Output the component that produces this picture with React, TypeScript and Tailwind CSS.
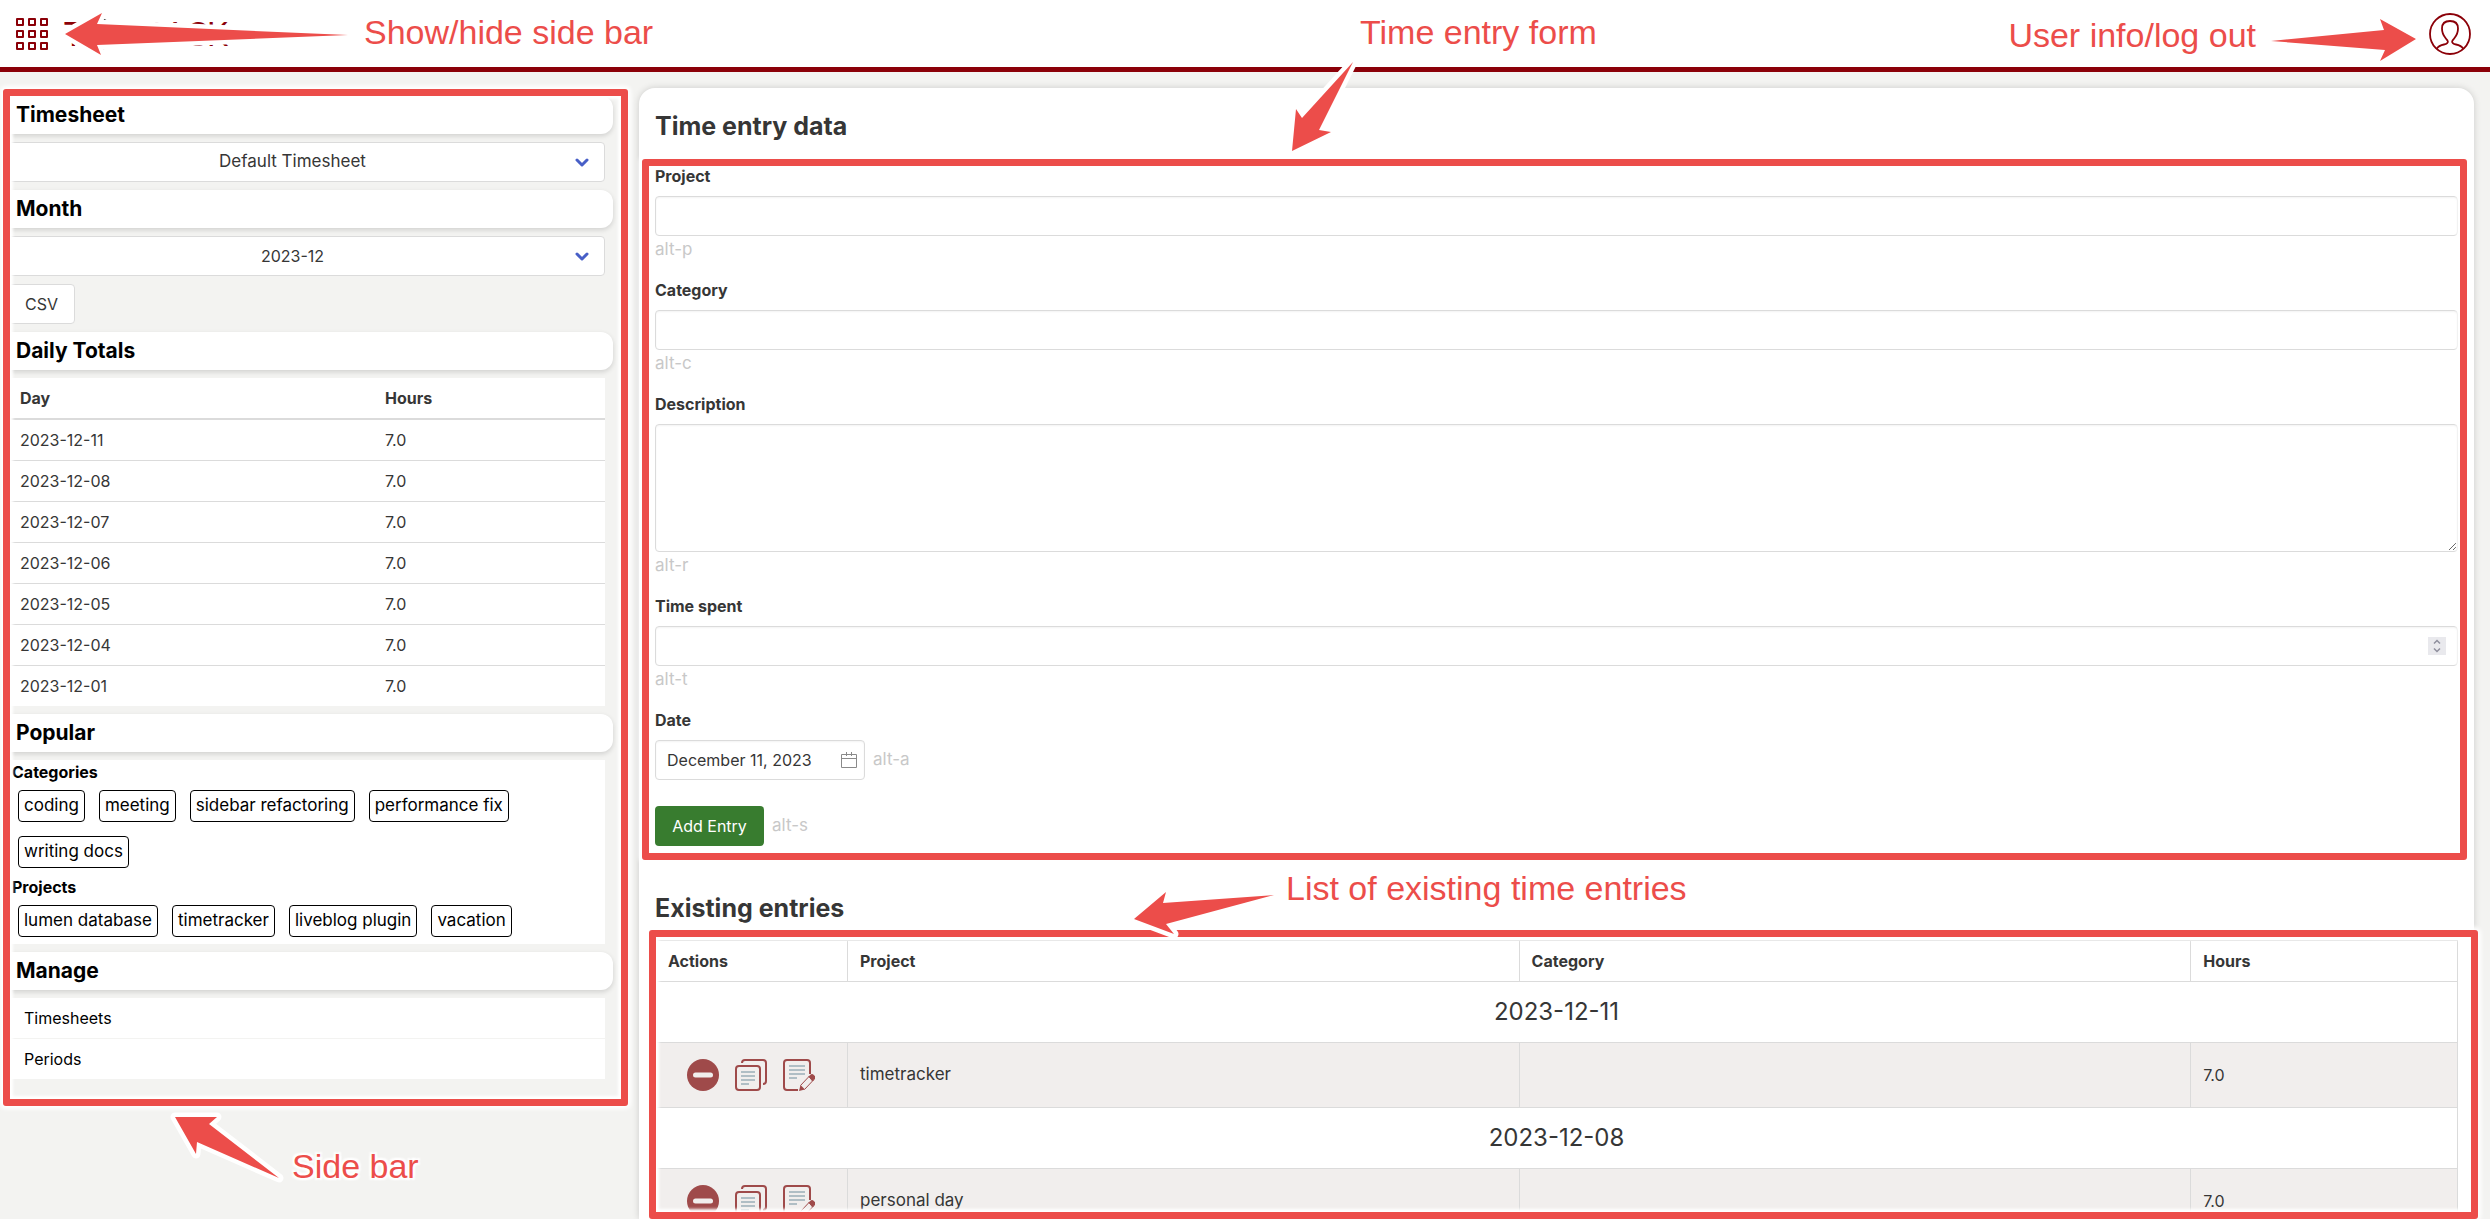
import type { ReactNode } from "react";

const days = ["2023-12-11", "2023-12-08", "2023-12-07", "2023-12-06", "2023-12-05", "2023-12-04", "2023-12-01"];
const categories = ["coding", "meeting", "sidebar refactoring", "performance fix", "writing docs"];
const projects = ["lumen database", "timetracker", "liveblog plugin", "vacation"];
const entries = [
  { date: "2023-12-11", project: "timetracker", category: "", hours: "7.0" },
  { date: "2023-12-08", project: "personal day", category: "", hours: "7.0" },
];

function Frame({ className }: { className: string }) {
  return (
    <div
      className={`pointer-events-none absolute z-10 rounded-[3px] border-[7px] border-[#ec4d4a] shadow-[0_0_4px_3px_#fff,inset_0_0_3px_3px_#fff] ${className}`}
    />
  );
}

function Arrow({ className, width, height, points }: { className: string; width: number; height: number; points: string }) {
  return (
    <svg
      aria-hidden="true"
      width={width}
      height={height}
      viewBox={`0 0 ${width} ${height}`}
      className={`pointer-events-none absolute z-20 overflow-visible ${className}`}
    >
      <polygon points={points} fill="#fff" stroke="#fff" strokeWidth="9" strokeLinejoin="round" />
      <polygon points={points} fill="#ec4d4a" />
    </svg>
  );
}

function Note({ className, children }: { className: string; children: ReactNode }) {
  return (
    <div
      className={`pointer-events-none absolute z-20 font-['Liberation_Sans',sans-serif] text-[34px] leading-[34px] whitespace-nowrap text-[#ec4d4a] [text-shadow:0_0_3px_#fff,0_0_3px_#fff,2px_2px_2px_#fff,-2px_-2px_2px_#fff,2px_-2px_2px_#fff,-2px_2px_2px_#fff] ${className}`}
    >
      {children}
    </div>
  );
}

function SideHeading({ children }: { children: ReactNode }) {
  return (
    <h2 className="flex h-[38px] items-center rounded-r-xl bg-white pl-2 text-[21px] font-bold text-black shadow-[0_2px_5px_rgba(0,0,0,0.14)]">
      {children}
    </h2>
  );
}

function SideSelect({ label, value, small }: { label: string; value: string; small?: boolean }) {
  return (
    <div className="relative mr-2">
      <select
        aria-label={label}
        defaultValue={value}
        className={`h-10 w-full appearance-none rounded border border-[#dbdbdb] bg-white pr-10 pl-3 [text-align-last:center] ${small ? "text-base" : "text-[17px]"}`}
      >
        <option>{value}</option>
      </select>
      <svg aria-hidden="true" viewBox="0 0 14 10" className="pointer-events-none absolute top-4 right-4 h-[10px] w-[14px]">
        <path d="M2 2l5 5 5-5" fill="none" stroke="#485fc7" strokeWidth="3" strokeLinecap="round" strokeLinejoin="round" />
      </svg>
    </div>
  );
}

function Chips({ items }: { items: string[] }) {
  return (
    <div className="flex flex-wrap gap-x-3.5 gap-y-3.5 pt-1.5 pr-16 pb-[7px] pl-2.5">
      {items.map((item) => (
        <a key={item} href="#" className="flex h-8 items-center rounded border border-black px-[5px] text-[17px] text-black">
          {item}
        </a>
      ))}
    </div>
  );
}

const inputClass =
  "block h-10 w-full rounded border border-[#dbdbdb] bg-white px-[11px] text-base text-[#363636] shadow-[inset_0_1px_2px_rgba(10,10,10,0.05)] outline-none";

function Field({ id, label, hint, children }: { id: string; label: string; hint: string; children: ReactNode }) {
  return (
    <div className="mb-4">
      <label htmlFor={id} className="mb-2 block text-base leading-6 font-bold">
        {label}
      </label>
      {children}
      <p className="text-[17px] leading-[26px] text-[#c8c8c8]">{hint}</p>
    </div>
  );
}

function RemoveIcon() {
  return (
    <svg viewBox="0 0 32 32" className="size-8">
      <circle cx="16" cy="16" r="16" fill="#9f4a4a" />
      <rect x="6" y="13.5" width="20" height="5" rx="2.5" fill="#f1eeed" />
    </svg>
  );
}

function CopyIcon() {
  return (
    <svg viewBox="0 0 32 32" className="size-8" fill="none" stroke="#9f4a4a" strokeWidth="2">
      <path d="M7 4C7 2 8 1 10 1H28a3 3 0 0 1 3 3V22c0 2-1 3-3 3" />
      <rect x="1" y="7" width="24" height="24" rx="3" />
      <path d="M6 13H20M6 17H20M6 21H20M6 25H14" stroke="#b0bec5" />
    </svg>
  );
}

function EditIcon() {
  return (
    <svg viewBox="0 0 32 32" className="size-8" fill="none" stroke="#9f4a4a" strokeWidth="2">
      <path d="M27 15V4a3 3 0 0 0-3-3H4a3 3 0 0 0-3 3V28a3 3 0 0 0 3 3H15" />
      <path d="M6 7H22M6 11H22M6 15H22M6 19H14" stroke="#b0bec5" />
      <path d="M16 32l1.500-6 4.500 4.500z" fill="#9f4a4a" stroke="none" />
      <path d="M17.500 26.500L26 17.500l4 4-8.500 9" strokeWidth="1" />
      <path d="M26 17.500l1-1a2.800 2.800 0 0 1 4 0 2.800 2.800 0 0 1 0 4l-1.500 1.500z" fill="#9f4a4a" strokeWidth="1" />
    </svg>
  );
}

export default function App() {
  return (
    <div className="relative flex h-screen flex-col overflow-hidden bg-[#f3f3f1] font-[Inter,'Noto_Sans',sans-serif] text-base text-[#363636]">
      <header className="flex h-[72px] shrink-0 items-center border-b-[5px] border-[#8b0008] bg-white pr-[19px] pl-4">
        <button aria-label="Toggle side bar" className="grid grid-cols-3 gap-1">
          {Array.from({ length: 9 }, (_, i) => (
            <span key={i} className="size-2 rounded-[1px] border-2 border-[#8b0008]" />
          ))}
        </button>
        <a
          href="#"
          className="ml-4 flex w-[164px] items-center font-[Lato,sans-serif] text-[32px] leading-none text-[#8b0008]"
        >
          <span>T</span>
          <svg aria-hidden="true" viewBox="0 0 32 32" className="size-8" fill="none" stroke="#555" strokeWidth="2">
            <circle cx="16" cy="16" r="15" />
            <path d="M16 8v8l5 4" />
          </svg>
          <span className="ml-auto">RACK</span>
        </a>
        <button aria-label="User info" className="ml-auto">
          <svg viewBox="0 0 42 42" className="size-[42px]" fill="none" stroke="#8b0008" strokeWidth="1.800">
            <circle cx="21" cy="21" r="20" />
            <path d="M7.500 36C9 33.500 12 32 15 31.500C18 31 19.300 29.500 18.800 28C18.500 27 17.500 26.500 16.500 25C14 22 13 19 13 15.500C13 10.500 15.500 8 21 8C26.500 8 29 10.500 29 15.500C29 19 28 22 25.500 25C24.500 26.500 23.500 27 23.200 28C22.700 29.500 24 31 27 31.500C30 32 33 33.500 34.500 36" />
          </svg>
        </button>
      </header>

      <div className="flex min-h-0 flex-1 items-start pr-4 pl-2">
        <aside className="relative mt-6 mr-[26px] flex w-[605px] shrink-0 flex-col gap-2">
          <SideHeading>Timesheet</SideHeading>
          <SideSelect label="Timesheet" value="Default Timesheet" />
          <SideHeading>Month</SideHeading>
          <SideSelect label="Month" value="2023-12" small />
          <button className="h-10 w-[67px] rounded border border-[#dbdbdb] bg-white text-base">CSV</button>
          <SideHeading>Daily Totals</SideHeading>
          <div className="mr-2 bg-white">
            <table className="w-full border-separate border-spacing-0 text-left">
              <thead>
                <tr>
                  <th className="h-[42px] w-[365px] border-b-2 border-[#dbdbdb] pl-3">Day</th>
                  <th className="border-b-2 border-[#dbdbdb] pl-3">Hours</th>
                </tr>
              </thead>
              <tbody className="[&>tr:last-child>td]:h-10 [&>tr:last-child>td]:border-b-0">
                {days.map((day) => (
                  <tr key={day}>
                    <td className="h-[41px] border-b border-[#dbdbdb] pl-3">{day}</td>
                    <td className="border-b border-[#dbdbdb] pl-3">7.0</td>
                  </tr>
                ))}
              </tbody>
            </table>
          </div>
          <SideHeading>Popular</SideHeading>
          <div className="mr-2 bg-white text-black">
            <h3 className="pl-1 text-base leading-6 font-bold">Categories</h3>
            <Chips items={categories} />
            <h3 className="pl-1 text-base leading-6 font-bold">Projects</h3>
            <Chips items={projects} />
          </div>
          <SideHeading>Manage</SideHeading>
          <nav className="mr-2 bg-white text-base text-black">
            <a href="#" className="flex h-[41px] items-center border-b border-[#f3f3f1] pl-4">
              Timesheets
            </a>
            <a href="#" className="flex h-10 items-center pl-4">
              Periods
            </a>
          </nav>
          <Frame className="-top-[7px] -right-[15px] -bottom-[27px] -left-[5px]" />
        </aside>

        <main className="mt-4 flex min-w-0 flex-1 flex-col self-stretch rounded-t-2xl bg-white px-4 pt-5 shadow-[0_0_7px_rgba(0,0,0,0.16)]">
          <h1 className="mb-5 text-[25px] leading-9 font-bold">Time entry data</h1>
          <form className="relative" onSubmit={(e) => e.preventDefault()}>
            <Field id="project" label="Project" hint="alt-p">
              <input id="project" type="text" className={inputClass} />
            </Field>
            <Field id="category" label="Category" hint="alt-c">
              <input id="category" type="text" className={inputClass} />
            </Field>
            <Field id="description" label="Description" hint="alt-r">
              <textarea
                id="description"
                className="block h-32 w-full rounded border border-[#dbdbdb] bg-white p-[11px] text-base shadow-[inset_0_1px_2px_rgba(10,10,10,0.05)] outline-none"
              />
            </Field>
            <Field id="time-spent" label="Time spent" hint="alt-t">
              <div className="relative">
                <input id="time-spent" type="text" inputMode="decimal" className={inputClass} />
                <svg aria-hidden="true" viewBox="0 0 18 18" className="absolute top-[11px] right-3 size-[18px] bg-[#e9e9ed]">
                  <path d="M6 6.500l3-3 3 3M6 11.500l3 3 3-3" fill="none" stroke="#8f8f9d" strokeWidth="1.500" />
                </svg>
              </div>
            </Field>
            <label htmlFor="date" className="mb-2 block text-base leading-6 font-bold">
              Date
            </label>
            <div className="mb-[26px] flex items-center gap-2">
              <div className="relative w-[210px]">
                <input id="date" type="text" defaultValue="December 11, 2023" className={inputClass} />
                <svg
                  aria-hidden="true"
                  viewBox="0 0 16 16"
                  className="absolute top-3 right-2 size-4"
                  fill="none"
                  stroke="#8a8a8a"
                >
                  <path d="M.5 2.500h15v13H.5zM.5 6.500h15M5.500 0v4M10.500 0v4" />
                </svg>
              </div>
              <span className="text-[17px] text-[#c8c8c8]">alt-a</span>
            </div>
            <div className="flex items-center gap-2">
              <button className="h-10 w-[109px] rounded bg-[#387c2f] text-base text-white">Add Entry</button>
              <span className="text-[17px] text-[#c8c8c8]">alt-s</span>
            </div>
            <Frame className="-top-[5px] -right-[9px] -bottom-[14px] -left-[13px]" />
          </form>

          <h2 className="mt-11 mb-3.5 text-[25px] leading-9 font-bold">Existing entries</h2>
          <section aria-label="Existing entries" className="relative min-h-0 flex-1">
            <div className="h-full overflow-hidden">
              <table className="w-full table-fixed border-collapse text-left">
                <colgroup>
                  <col className="w-48" />
                  <col className="w-[37.27%]" />
                  <col className="w-[37.27%]" />
                  <col />
                </colgroup>
                <thead>
                  <tr className="h-[41px]">
                    {["Actions", "Project", "Category", "Hours"].map((name) => (
                      <th key={name} className="border border-[#dbdbdb] px-3">
                        {name}
                      </th>
                    ))}
                  </tr>
                </thead>
                {entries.map((entry) => (
                  <tbody key={entry.date}>
                    <tr className="h-[61px]">
                      <td colSpan={4} className="border border-[#dbdbdb] text-center text-2xl">
                        {entry.date}
                      </td>
                    </tr>
                    <tr className="h-[65px] bg-[#f1eeed] text-[17px]">
                      <td className="border border-[#dbdbdb] pl-[31px]">
                        <div className="flex gap-4">
                          <button aria-label="Remove entry"><RemoveIcon /></button>
                          <button aria-label="Copy entry"><CopyIcon /></button>
                          <button aria-label="Edit entry"><EditIcon /></button>
                        </div>
                      </td>
                      <td className="border border-[#dbdbdb] px-3">{entry.project}</td>
                      <td className="border border-[#dbdbdb] px-3">{entry.category}</td>
                      <td className="border border-[#dbdbdb] px-3 text-base">{entry.hours}</td>
                    </tr>
                  </tbody>
                ))}
              </table>
            </div>
            <Frame className="-top-[10px] -right-5 bottom-0 -left-[6px]" />
          </section>
        </main>
      </div>

      <Arrow className="top-[13px] left-[65px]" width={283} height={42} points="0,21 37,0 32,11 283,22 32,32 36,42" />
      <Note className="top-[15px] left-[364px]">Show/hide side bar</Note>
      <Arrow className="top-[62px] left-[1292px]" width={61} height={89} points="0,89 4,47 10,56 61,0 27,68 39,70" />
      <Note className="top-[15px] left-[1360px]">Time entry form</Note>
      <Arrow className="top-[19px] right-[74px]" width={145} height={42} points="0,22 113,11 109,0 145,20 109,42 114,31" />
      <Note className="top-[18px] right-[234px]">User info/log out</Note>
      <Arrow className="top-[892px] left-[1134px]" width={140} height={42} points="0,27 32,0 29,11 140,3 32,32 40,42" />
      <Note className="top-[871px] left-[1286px]">List of existing time entries</Note>
      <Arrow className="top-[1117px] left-[175px]" width={104} height={61} points="0,0 42,0 34,7 104,61 22,25 21,37" />
      <Note className="top-[1149px] left-[292px]">Side bar</Note>
    </div>
  );
}
